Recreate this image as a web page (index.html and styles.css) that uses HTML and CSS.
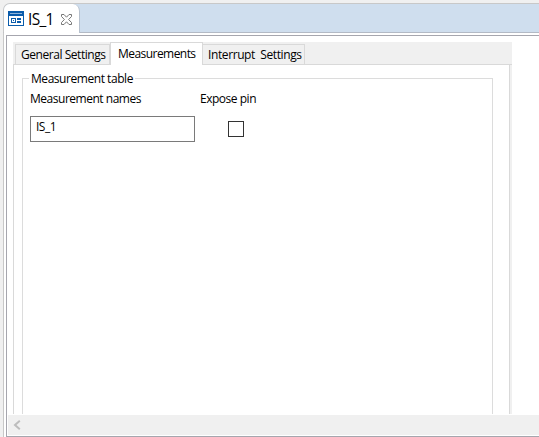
FILE: index.html
```html
<!DOCTYPE html>
<html lang="en">
<head>
<meta charset="utf-8">
<title>IS_1</title>
<link rel="stylesheet" href="styles.css">
</head>
<body>
<div class="editor">
  <header class="strip">
    <div class="doc-tab">
      <svg class="doc-icon" width="16" height="15" viewBox="0 0 16 15" shape-rendering="crispEdges">
        <path fill="#0b5cab" fill-rule="evenodd" d="M0 0h16v15H0zM1 5v9h14V5z"/>
        <path fill="#8fb4da" d="M2 2h12v1H2z"/>
        <path fill="#0b5cab" fill-rule="evenodd" d="M3 7h5v5H3zM4 8v3h3V8zM5 9h1v1H5zM9 7h4v2H9zM9 10h4v2H9z"/>
      </svg>
      <span class="doc-name">IS_1</span>
      <svg class="close" width="11" height="11" viewBox="0 0 11 11">
        <path fill="#fff" stroke="#777" stroke-width="1" d="M.5 .5h2.500L5.500 3.200 8 .5h2.500v2L7.600 5.500 10.500 8.500v2H8L5.500 7.800 3 10.500H.5v-2L3.400 5.500 .5 2.500z"/>
      </svg>
    </div>
  </header>
  <main class="viewport">
    <section class="folder">
      <nav class="tabs">
        <div class="tab general">General Settings</div>
        <div class="tab active"><span>Measurements</span></div>
        <div class="tab interrupt">Interrupt&nbsp; Settings</div>
      </nav>
      <div class="page">
        <fieldset class="group">
          <legend>Measurement table</legend>
          <div class="grid">
            <span class="names">Measurement names</span>
            <span class="expose">Expose pin</span>
            <div class="input">IS_1</div>
            <div class="check"></div>
          </div>
        </fieldset>
      </div>
    </section>
    <footer class="scrollbar">
      <svg width="8" height="10" viewBox="0 0 8 10"><path fill="none" stroke="#bdbdbd" stroke-width="2" d="M6.800 .8 2 5l4.800 4.200"/></svg>
    </footer>
  </main>
</div>
</body>
</html>
```
FILE: styles.css
```css
* { box-sizing: border-box; }
body {
  margin: 0;
  width: 539px;
  height: 437px;
  overflow: hidden;
  background: #f0f0f0;
  color: #000;
  font: 12px/16px "Open Sans", "Noto Sans", sans-serif;
  white-space: nowrap;
}
.editor {
  height: 437px;
  margin-left: 3px;
  padding-top: 3px;
  display: flex;
  flex-direction: column;
}
.strip {
  height: 30px;
  flex: none;
  background: #cfdeee;
  border-top: 1px solid #c8c8c8;
  border-left: 1px solid #c8c8c8;
  border-bottom: 1px solid #b3bac5;
  border-top-left-radius: 7px;
}
.doc-tab {
  width: 76px;
  height: 29px;
  display: flex;
  align-items: flex-start;
  padding: 7px 0 0 4px;
  background: #fff;
  border-right: 1px solid #b7c1ce;
  border-radius: 6px 7px 0 0;
}
.doc-name {
  width: 27px;
  margin: -1px 6px 0 4px;
  font-size: 15.5px;
  line-height: 19px;
  letter-spacing: -0.7px;
}
.doc-icon, .close { flex: none; }
.close { margin-top: 3px; }
.viewport {
  flex: 1;
  display: flex;
  flex-direction: column;
  padding-top: 2px;
  background: #fff;
  border-left: 1px solid #c8c8c8;
}
.viewport::before {
  content: "";
  height: 1px;
  margin-left: 2px;
  background: #a6a6ae;
}
.folder {
  width: 506px;
  height: 379px;
  flex: none;
  margin-left: 2px;
  padding: 6px 0 0 6px;
  border-left: 1px solid #a6a6ae;
}
.tabs {
  width: 499px;
  height: 22px;
  display: flex;
  align-items: flex-end;
  padding-left: 2px;
  background: #f0f0f0;
}
.tab {
  height: 20px;
  padding-top: 2px;
  border: 1px solid #d9d9d9;
  border-bottom: 0;
}
.general { width: 95px; padding-left: 5px; letter-spacing: -0.45px; }
.active {
  width: 93px;
  height: 23px;
  margin-bottom: -1px;
  padding: 3px 0 0 7px;
  z-index: 1;
  background: #fff;
  letter-spacing: -0.55px;
}
.interrupt { width: 102px; padding-left: 5px; border-left: 0; letter-spacing: -0.4px; }
.page {
  width: 499px;
  height: 350px;
  padding: 6px 19px 0 8px;
  border: solid #d9d9d9;
  border-width: 1px 0 0 1px;
  background: linear-gradient(90deg, #fff 495px, #d9d9d9 495px, #d9d9d9 496px, #f0f0f0 496px);
}
.group {
  height: 343px;
  margin: 0;
  padding: 0 0 0 7px;
  border: 1px solid #dcdcdc;
  border-bottom: 0;
}
legend { height: 14px; padding: 0 2px; margin-left: -1px; letter-spacing: -0.45px; }
.grid {
  display: grid;
  grid-template-columns: 170px auto;
  grid-template-rows: 25px 26px;
  padding-top: 6px;
  justify-content: start;
}
.names, .expose { letter-spacing: -0.48px; }
.input {
  width: 165px;
  height: 26px;
  padding: 2px 5px;
  border: 1px solid #7a7a7a;
  letter-spacing: -0.5px;
}
.check {
  width: 16px;
  height: 16px;
  margin: 5px 0 0 28px;
  border: 1px solid #333;
}
.scrollbar {
  height: 22px;
  flex: none;
  margin-left: 2px;
  padding: 5px 0 0 6px;
  border-left: 1px solid #a6a6ae;
  border-bottom: 1px solid #a6a6ae;
  background: linear-gradient(#f0f0f0, #f0f0f0) 1px 0 / 100% 20px no-repeat;
}
.scrollbar svg { display: block; }
```
